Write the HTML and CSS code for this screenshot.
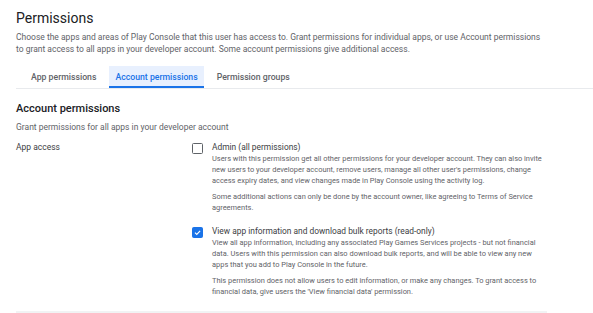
FILE: index.html
```html
<!DOCTYPE html>
<html lang="en">
<head>
  <meta charset="UTF-8">
  <meta name="viewport" content="width=device-width, initial-scale=1.0">
  <title>Permissions</title>
  <link rel="stylesheet" href="styles.css">
</head>
<body>
  <div class="page">
    <h1 class="title">Permissions</h1>
    <p class="intro">Choose the apps and areas of Play Console that this user has access to. Grant permissions for individual apps, or use Account permissions to grant access to all apps in your developer account. Some account permissions give additional access.</p>

    <div class="tabs">
      <div class="tab">App permissions</div>
      <div class="tab active">Account permissions</div>
      <div class="tab">Permission groups</div>
    </div>

    <section class="section">
      <h2>Account permissions</h2>
      <p class="sub">Grant permissions for all apps in your developer account</p>

      <div class="row">
        <div class="row-label">App access</div>
        <div class="options">
          <div class="option">
            <span class="check"></span>
            <div class="option-body">
              <div class="option-title">Admin (all permissions)</div>
              <p class="option-text">Users with this permission get all other permissions for your developer account. They can also invite new users to your developer account, remove users, manage all other user's permissions, change access expiry dates, and view changes made in Play Console using the activity log.</p>
              <p class="option-text">Some additional actions can only be done by the account owner, like agreeing to Terms of Service agreements.</p>
            </div>
          </div>
          <div class="option">
            <span class="check checked">
              <svg viewBox="0 0 12 12" width="11" height="11"><path d="M2.6 6.2 L5 8.5 L9.5 3.7" fill="none" stroke="#fff" stroke-width="1.5"/></svg>
            </span>
            <div class="option-body">
              <div class="option-title">View app information and download bulk reports (read-only)</div>
              <p class="option-text">View all app information, including any associated Play Games Services projects - but not financial data. Users with this permission can also download bulk reports, and will be able to view any new apps that you add to Play Console in the future.</p>
              <p class="option-text">This permission does not allow users to edit information, or make any changes. To grant access to financial data, give users the 'View financial data' permission.</p>
            </div>
          </div>
        </div>
      </div>
      <div class="bottom-line"></div>
    </section>
  </div>
</body>
</html>
```

FILE: styles.css
```css
* {
  margin: 0px;
  padding: 0px;
  box-sizing: border-box;
}

body {
  font-family: Roboto, "Liberation Sans", sans-serif;
  background-color: white;
  color: #202124;
}

.page {
  padding: 0 0 0 16px;
}

.title {
  font-size: 14px;
  font-weight: 400;
  line-height: 20px;
  margin-top: 8px;
}

.intro {
  font-size: 8.5px;
  line-height: 12px;
  color: #5f6368;
  margin-top: 3px;
  width: 528px;
}

.tabs {
  display: flex;
  gap: 7px;
  margin-top: 11px;
  padding-left: 9px;
  border-bottom: 1px solid #e8eaed;
}

.tab {
  font-size: 8.7px;
  font-weight: 500;
  color: #5f6368;
  height: 22px;
  line-height: 22px;
  padding: 0 6px;
  border-bottom: 2px solid transparent;
}

.tab.active {
  background-color: #e8f0fe;
  color: #1a73e8;
  border-bottom-color: #1a73e8;
}

.section h2 {
  font-size: 11px;
  font-weight: 500;
  line-height: 16px;
  margin-top: 12px;
}

.sub {
  font-size: 8.5px;
  line-height: 12px;
  color: #5f6368;
  margin-top: 4px;
}

.row {
  display: flex;
  margin-top: 8px;
}

.row-label {
  width: 176px;
  font-size: 8.5px;
  line-height: 12px;
  color: #3c4043;
}

.options {
  display: flex;
  flex-direction: column;
  gap: 12px;
  width: 355px;
}

.option {
  display: flex;
  gap: 9px;
}

.check {
  flex: none;
  width: 11px;
  height: 11px;
  margin-top: 2px;
  border: 1.5px solid #5f6368;
  border-radius: 1.5px;
  display: flex;
  align-items: center;
  justify-content: center;
}

.check.checked {
  background-color: #1a73e8;
  border-color: #1a73e8;
}

.option-title {
  font-size: 8.4px;
  line-height: 12px;
  color: #3c4043;
}

.option-text {
  font-size: 7.45px;
  line-height: 11px;
  color: #5f6368;
  margin-bottom: 5px;
}

.option-text:last-child {
  margin-bottom: 0;
}

.bottom-line {
  width: 531px;
  height: 2px;
  background-color: #f1f3f4;
  margin-top: 14px;
}
```
